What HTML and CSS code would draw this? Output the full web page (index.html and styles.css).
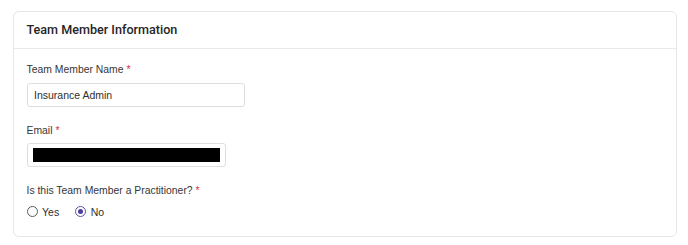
FILE: index.html
```html
<!DOCTYPE html>
<html>
<head>
<meta charset="utf-8">
<link rel="stylesheet" href="styles.css">
</head>
<body>
<section class="card">
  <header class="card-header">Team Member Information</header>
  <div class="card-body">
    <div class="field">
      <label class="label">Team Member Name <span class="req">*</span></label>
      <div class="input input-name">Insurance Admin</div>
    </div>
    <div class="field">
      <label class="label">Email <span class="req">*</span></label>
      <div class="input input-email"><span class="redact"></span></div>
    </div>
    <div class="field">
      <label class="label">Is this Team Member a Practitioner? <span class="req">*</span></label>
      <div class="radios">
        <span class="radio-opt"><span class="radio"></span>Yes</span>
        <span class="radio-opt"><span class="radio checked"></span>No</span>
      </div>
    </div>
  </div>
</section>
</body>
</html>
```
FILE: styles.css
```css
html, body {
  margin: 0;
  padding: 0;
  background: #ffffff;
}
body {
  font-family: "Liberation Sans", Arial, sans-serif;
  color: #333333;
}
.card {
  margin: 11px 11px 0 12.5px;
  height: 226px;
  box-sizing: border-box;
  border: 1px solid #e6e6e6;
  border-radius: 6px;
  display: flex;
  flex-direction: column;
}
.card-header {
  height: 37px;
  box-sizing: border-box;
  border-bottom: 1px solid #e9e9e9;
  padding: 0 13px 1px 13px;
  display: flex;
  align-items: center;
  font-family: Roboto, "Liberation Sans", sans-serif;
  font-weight: 500;
  font-size: 12.6px;
  color: #262626;
}
.card-body {
  padding: 14px 13px 0 13px;
  display: flex;
  flex-direction: column;
  gap: 17px;
}
.field {
  display: flex;
  flex-direction: column;
  align-items: flex-start;
  gap: 5.5px;
}
.label {
  font-size: 10.4px;
  line-height: 14px;
  color: #363636;
}
.req {
  color: #e0283a;
}
.input {
  box-sizing: border-box;
  height: 24px;
  border: 1px solid #dedede;
  border-radius: 3px;
  display: flex;
  align-items: center;
  font-size: 10.5px;
  color: #2e2e2e;
}
.input-name {
  width: 218px;
  padding-left: 6.5px;
}
.input-email {
  width: 199px;
  padding-left: 5px;
}
.redact {
  display: block;
  width: 187px;
  height: 13.5px;
  background: #000000;
}
.radios {
  display: flex;
  gap: 16px;
  height: 14px;
  align-items: center;
  margin-top: 1px;
}
.radio-opt {
  display: flex;
  align-items: center;
  gap: 4.5px;
  font-size: 10.5px;
  color: #2e2e2e;
}
.radio {
  width: 11px;
  height: 11px;
  box-sizing: border-box;
  border: 1px solid #5a5a5a;
  border-radius: 50%;
  display: inline-block;
  position: relative;
}
.radio.checked {
  border-color: #5b55a6;
  background: #ffffff;
}
.radio.checked::after {
  content: "";
  position: absolute;
  left: 2px;
  top: 2px;
  width: 5px;
  height: 5px;
  border-radius: 50%;
  background: #4a3f9e;
}
```
